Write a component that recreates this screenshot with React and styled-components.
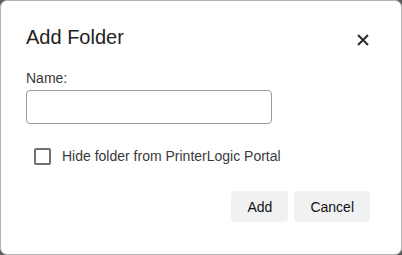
import React from 'react';
import styled, { createGlobalStyle } from 'styled-components';

const GlobalStyle = createGlobalStyle`
  html, body {
    margin: 0;
    padding: 0;
    background: #5c5c5c;
  }
  body {
    font-family: "Liberation Sans", Arial, sans-serif;
  }
`;

const Dialog = styled.div`
  box-sizing: border-box;
  width: 402px;
  height: 255px;
  background: #fff;
  border: 1px solid #b4b4b4;
  border-radius: 7px;
  padding: 25px 31px 0 25px;
  display: flex;
  flex-direction: column;
`;

const Header = styled.div`
  display: flex;
  justify-content: space-between;
  align-items: flex-start;
`;

const Title = styled.h2`
  margin: 0;
  font-size: 20px;
  line-height: 23px;
  font-weight: 400;
  color: #222;
`;

const CloseButton = styled.button`
  width: 14px;
  height: 14px;
  margin-top: 7px;
  padding: 0;
  border: none;
  background: transparent;
  display: flex;
  align-items: center;
  justify-content: center;
  cursor: pointer;
  color: #2b2b2b;
`;

const Label = styled.label`
  display: block;
  margin-top: 21px;
  font-size: 14px;
  line-height: 16px;
  color: #3a3a3a;
`;

const Input = styled.input`
  box-sizing: border-box;
  display: block;
  margin-top: 4px;
  width: 246px;
  height: 34px;
  border: 1px solid #9a9a9a;
  border-radius: 4px;
  padding: 0 8px;
  font: inherit;
  font-size: 14px;
`;

const CheckRow = styled.label`
  display: flex;
  align-items: center;
  gap: 11px;
  margin-top: 24px;
  margin-left: 8px;
  font-size: 14px;
  line-height: 17px;
  color: #3a3a3a;
  cursor: pointer;
`;

const Box = styled.span`
  box-sizing: border-box;
  width: 17px;
  height: 17px;
  border: 2px solid #707070;
  border-radius: 2px;
  flex-shrink: 0;
`;

const Actions = styled.div`
  display: flex;
  justify-content: flex-end;
  gap: 6px;
  margin-top: 26px;
`;

const Button = styled.button`
  height: 31px;
  padding: 0 16px;
  border: none;
  border-radius: 4px;
  background: #f0f1f3;
  color: #111;
  font-family: inherit;
  font-size: 14px;
  cursor: pointer;
`;

export default function App() {
  return (
    <>
      <GlobalStyle />
      <Dialog>
        <Header>
          <Title>Add Folder</Title>
          <CloseButton aria-label="Close">
            <svg width="12" height="12" viewBox="0 0 12 12">
              <path d="M1 1L11 11M11 1L1 11" stroke="currentColor" strokeWidth="2" />
            </svg>
          </CloseButton>
        </Header>
        <Label htmlFor="folder-name">Name:</Label>
        <Input id="folder-name" type="text" />
        <CheckRow>
          <Box />
          Hide folder from PrinterLogic Portal
        </CheckRow>
        <Actions>
          <Button>Add</Button>
          <Button>Cancel</Button>
        </Actions>
      </Dialog>
    </>
  );
}
